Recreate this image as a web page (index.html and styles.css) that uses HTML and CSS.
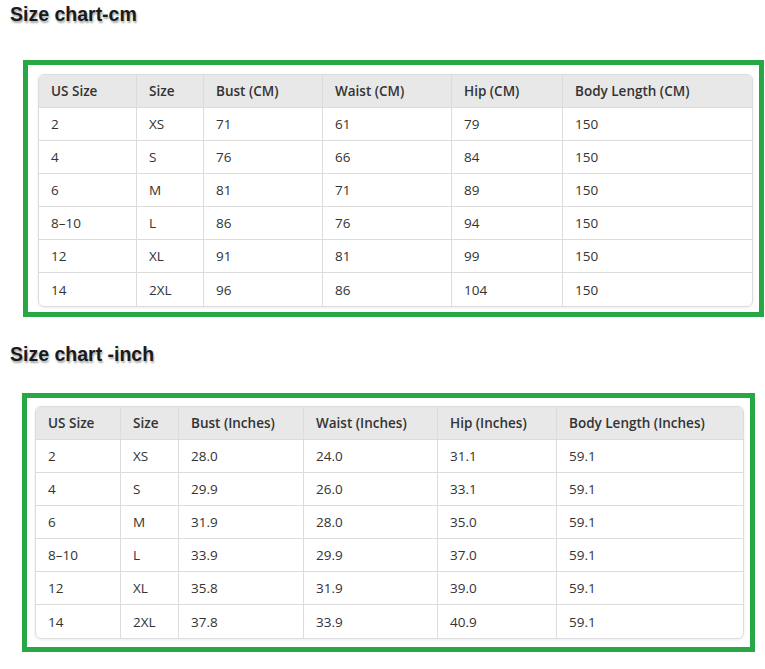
FILE: index.html
```html
<!DOCTYPE html>
<html>
<head>
<meta charset="utf-8">
<link rel="stylesheet" href="styles.css">
</head>
<body>
<h2 class="title title-cm">Size chart-cm</h2>
<div class="frame frame-cm">
  <table class="chart chart-cm">
    <colgroup><col class="c1"><col class="c2"><col class="c3"><col class="c4"><col class="c5"><col class="c6"></colgroup>
    <thead>
      <tr><th>US Size</th><th>Size</th><th>Bust (CM)</th><th>Waist (CM)</th><th>Hip (CM)</th><th>Body Length (CM)</th></tr>
    </thead>
    <tbody>
      <tr><td>2</td><td>XS</td><td>71</td><td>61</td><td>79</td><td>150</td></tr>
      <tr><td>4</td><td>S</td><td>76</td><td>66</td><td>84</td><td>150</td></tr>
      <tr><td>6</td><td>M</td><td>81</td><td>71</td><td>89</td><td>150</td></tr>
      <tr><td>8–10</td><td>L</td><td>86</td><td>76</td><td>94</td><td>150</td></tr>
      <tr><td>12</td><td>XL</td><td>91</td><td>81</td><td>99</td><td>150</td></tr>
      <tr><td>14</td><td>2XL</td><td>96</td><td>86</td><td>104</td><td>150</td></tr>
    </tbody>
  </table>
</div>
<h2 class="title title-inch">Size chart -inch</h2>
<div class="frame frame-inch">
  <table class="chart chart-inch">
    <colgroup><col class="c1"><col class="c2"><col class="c3"><col class="c4"><col class="c5"><col class="c6"></colgroup>
    <thead>
      <tr><th>US Size</th><th>Size</th><th>Bust (Inches)</th><th>Waist (Inches)</th><th>Hip (Inches)</th><th>Body Length (Inches)</th></tr>
    </thead>
    <tbody>
      <tr><td>2</td><td>XS</td><td>28.0</td><td>24.0</td><td>31.1</td><td>59.1</td></tr>
      <tr><td>4</td><td>S</td><td>29.9</td><td>26.0</td><td>33.1</td><td>59.1</td></tr>
      <tr><td>6</td><td>M</td><td>31.9</td><td>28.0</td><td>35.0</td><td>59.1</td></tr>
      <tr><td>8–10</td><td>L</td><td>33.9</td><td>29.9</td><td>37.0</td><td>59.1</td></tr>
      <tr><td>12</td><td>XL</td><td>35.8</td><td>31.9</td><td>39.0</td><td>59.1</td></tr>
      <tr><td>14</td><td>2XL</td><td>37.8</td><td>33.9</td><td>40.9</td><td>59.1</td></tr>
    </tbody>
  </table>
</div>
</body>
</html>
```

FILE: styles.css
```css
html, body {
  margin: 0;
  padding: 0;
  background: #ffffff;
}
body {
  font-family: "Open Sans", "Noto Sans", sans-serif;
  color: #333333;
}
.title {
  font-family: "Liberation Sans", Arial, sans-serif;
  font-weight: 700;
  font-size: 19.5px;
  line-height: 24px;
  height: 24px;
  color: #1a1a1a;
  margin: 0 0 0 10px;
  text-shadow: 1px 2px 2px rgba(0, 0, 0, 0.35);
}
.title-cm {
  margin-top: 2px;
}
.title-inch {
  margin-top: 25px;
}
.frame {
  border: 5px solid #27a845;
  box-sizing: border-box;
  background: #fff;
}
.frame-cm {
  margin: 34px 0 0 23px;
  width: 741px;
  height: 257px;
  padding: 9px 6px 6px 10px;
}
.frame-inch {
  margin: 27px 0 0 22px;
  width: 733px;
  height: 259px;
  padding: 8px 6px 10px 8px;
}
.chart {
  width: 100%;
  table-layout: fixed;
  border-collapse: separate;
  border-spacing: 0;
  border: 1px solid #dcdcdc;
  border-radius: 6px;
  box-shadow: 0 1px 3px rgba(0, 0, 0, 0.08);
  overflow: hidden;
  font-size: 13.5px;
}
.chart th, .chart td {
  height: 33px;
  box-sizing: border-box;
  padding: 0 12px;
  text-align: left;
  vertical-align: middle;
  border-right: 1px solid #dcdcdc;
  border-bottom: 1px solid #dcdcdc;
  white-space: nowrap;
}
.chart th:last-child, .chart td:last-child {
  border-right: none;
}
.chart tbody tr:last-child td {
  border-bottom: none;
}
.chart th {
  background: #e8e8e8;
  font-weight: 600;
  color: #333;
}
.chart td {
  font-weight: 400;
  color: #333;
}
.chart-cm .c1 { width: 98px; }
.chart-cm .c2 { width: 67px; }
.chart-cm .c3 { width: 119px; }
.chart-cm .c4 { width: 129px; }
.chart-cm .c5 { width: 111px; }
.chart-cm .c6 { width: auto; }
.chart-inch .c1 { width: 85px; }
.chart-inch .c2 { width: 58px; }
.chart-inch .c3 { width: 125px; }
.chart-inch .c4 { width: 134px; }
.chart-inch .c5 { width: 119px; }
.chart-inch .c6 { width: auto; }
```
